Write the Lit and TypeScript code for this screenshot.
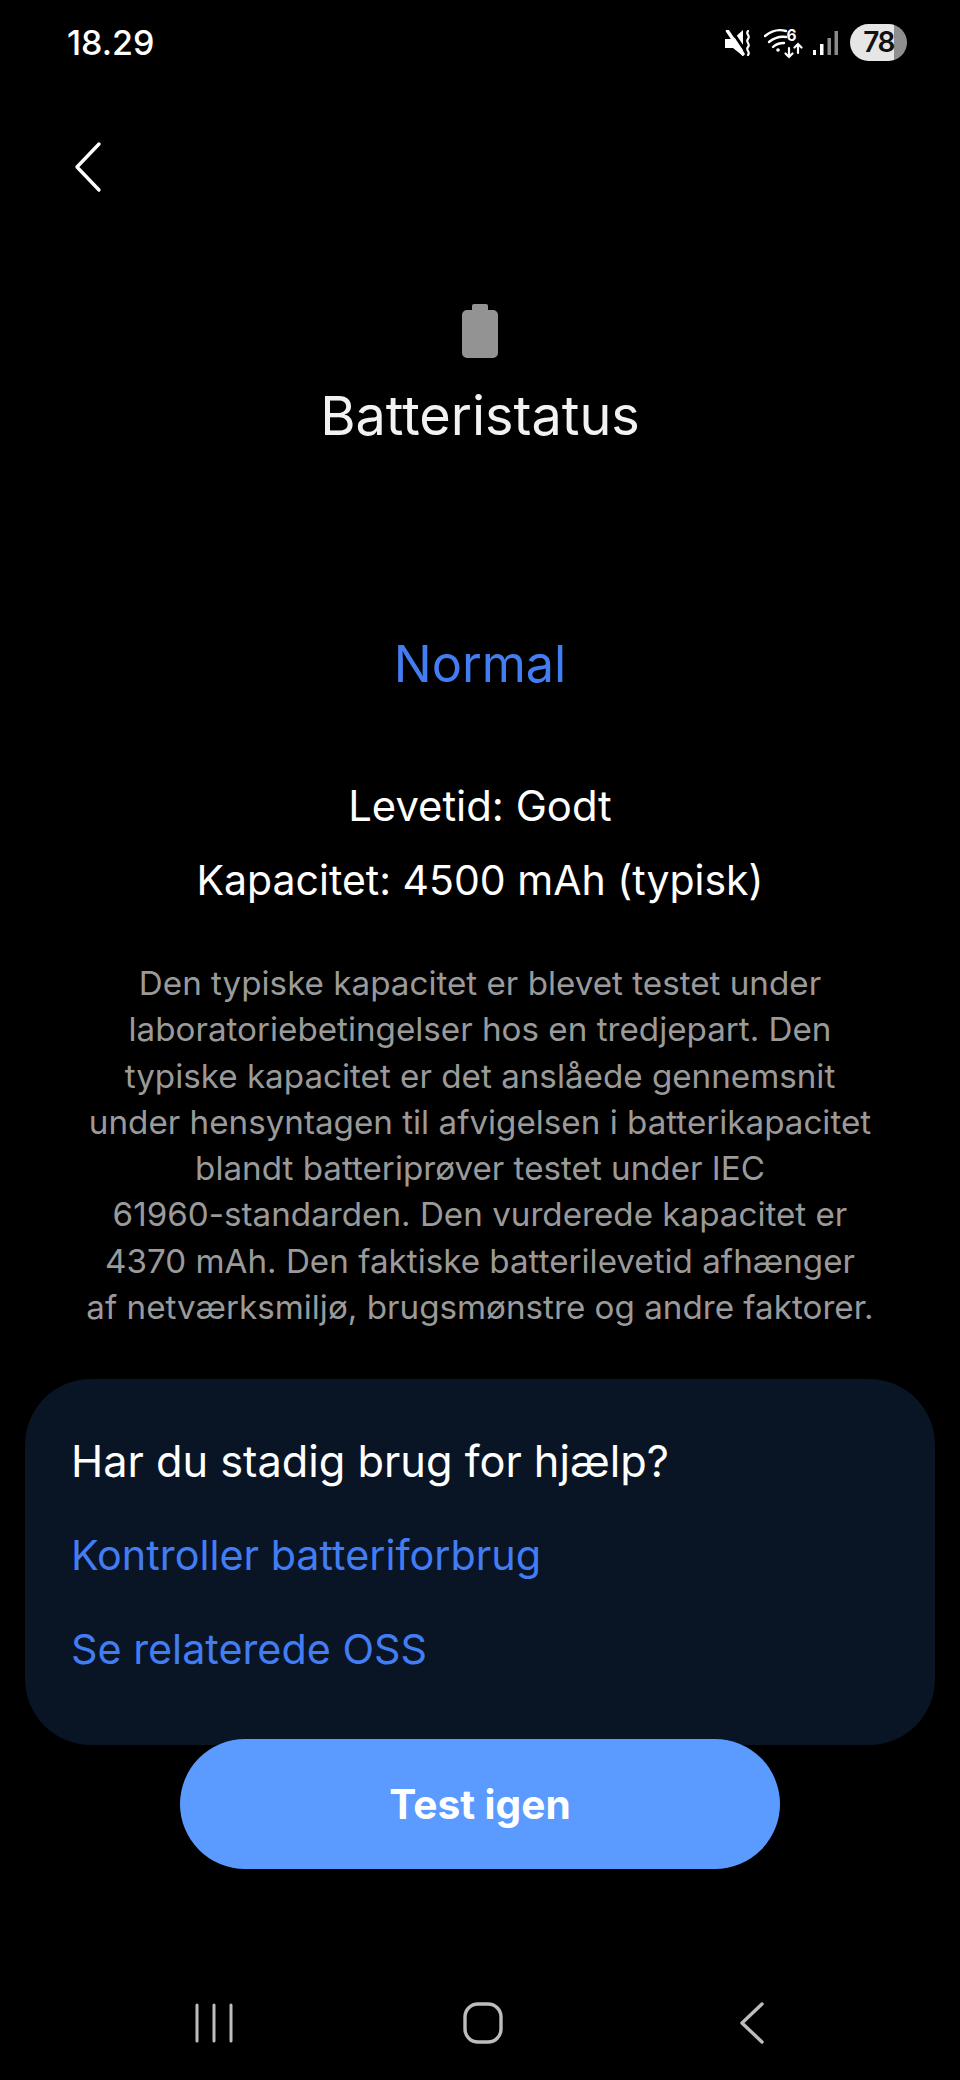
import { LitElement, html, css, svg } from 'lit';
import { customElement } from 'lit/decorators.js';

const muteIcon = svg`
  <path d="M0 9h8l10 -9v26l-10 -8h-8z" fill="#fff"/>
  <path d="M5 -2l16 24" stroke="#000" stroke-width="3" fill="none"/>
  <path d="M2.500 1l15.500 23" stroke="#fff" stroke-width="3.400" fill="none" stroke-linecap="round"/>
  <path d="M23 1c-3 3 3 4.500 0 8s3 4.500 0 8s3 4.500 0 8" stroke="#fff" stroke-width="2.200" fill="none" stroke-linecap="round"/>
`;

const wifiIcon = svg`
  <g fill="none" stroke="#fff" stroke-width="2.400" stroke-linecap="round">
    <path d="M1 8c6 -5 14 -7 21 -5"/>
    <path d="M5 14c5 -4 11 -6 17 -5"/>
    <path d="M9 19c3 -3 7 -4 11 -4"/>
    <path d="M25 20v9m-3.500 -3.500l3.500 3.500l3.500 -3.500" stroke-width="2.200"/>
    <path d="M34 25v-9m-3.500 3.500l3.500 -3.500l3.500 3.500" stroke-width="2.200"/>
  </g>
  <circle cx="14" cy="22" r="1.800" fill="#fff"/>
  <text x="22.500" y="13" font-size="15.500" font-weight="700" font-family="Inter, sans-serif" fill="#fff">6</text>
`;

@customElement('app-root')
export class AppRoot extends LitElement {
  static styles = css`
    :host {
      display: block;
      width: 960px;
      height: 2080px;
      background: #000;
      color: #fff;
      font-family: Inter, 'Noto Sans', sans-serif;
      overflow: hidden;
    }

    .status {
      display: flex;
      align-items: center;
      justify-content: space-between;
      height: 37px;
      padding: 24px 53px 0 67px;
    }

    .time {
      font-size: 34px;
      font-weight: 500;
    }

    .status-icons {
      display: flex;
      align-items: center;
      gap: 12px;
    }

    .mute { width: 26px; height: 26px; }
    .wifi { width: 39px; height: 44px; margin-left: 1px; }
    .signal { width: 26px; height: 26px; margin-left: -3px; }

    .pill {
      width: 57px;
      height: 37px;
      border-radius: 19px;
      background: linear-gradient(90deg, #e6e6e6 0 77%, #8f8f8f 77%);
      color: #111;
      font-size: 28px;
      font-weight: 600;
      letter-spacing: -1.5px;
      line-height: 37px;
      text-align: center;
    }

    .back {
      display: block;
      width: 30px;
      height: 52px;
      margin: 80px 0 0 73px;
    }

    main {
      display: flex;
      flex-direction: column;
      align-items: center;
      text-align: center;
    }

    .battery {
      width: 36px;
      height: 54px;
      margin-top: 111px;
    }

    h1 {
      margin: 27px 0 0;
      font-size: 54px;
      font-weight: 400;
      line-height: 62px;
      color: #f2f2f2;
    }

    .state {
      margin-top: 187px;
      font-size: 50.4px;
      line-height: 60px;
      color: #437df3;
    }

    .life {
      margin-top: 75px;
      font-size: 41px;
      line-height: 74px;
    }

    .life .short { font-size: 41.8px; }

    .note {
      width: 840px;
      margin: 43px 0 0;
      font-size: 33.2px;
      line-height: 46.3px;
      color: #9a9a9a;
    }

    .help {
      margin: 49px 25px 0;
      height: 366px;
      box-sizing: border-box;
      padding: 52px 46px 0;
      border-radius: 66px;
      background: #091425;
    }

    .help-title {
      font-size: 43.3px;
      line-height: 60px;
    }

    .help a {
      display: block;
      margin-top: 34px;
      font-size: 41.3px;
      line-height: 60px;
      color: #437df3;
    }

    .retry {
      position: relative;
      display: block;
      width: 600px;
      height: 130px;
      margin: -6px auto 0;
      border: 0;
      border-radius: 65px;
      background: #5b9bff;
      color: #fff;
      font: 700 40.6px Inter, sans-serif;
    }

    .nav {
      display: flex;
      align-items: center;
      gap: 229px;
      margin-top: 132px;
      padding-left: 194px;
    }

    .nav svg { display: block; height: 44px; }
    .nav svg:last-child { margin-left: 7px; }
  `;

  render() {
    return html`
      <div class="status">
        <span class="time">18.29</span>
        <div class="status-icons">
          <svg class="mute" viewBox="0 0 26 26">${muteIcon}</svg>
          <svg class="wifi" viewBox="0 -7 39 44">${wifiIcon}</svg>
          <svg class="signal" viewBox="0 0 26 26">
            <rect x="1" y="20" width="3" height="5" fill="#fff"/>
            <rect x="8" y="14" width="3.500" height="11" fill="#fff"/>
            <rect x="15.500" y="8" width="3.500" height="17" fill="#8a8a8a"/>
            <rect x="22.500" y="1" width="3.500" height="24" fill="#8a8a8a"/>
          </svg>
          <div class="pill">78</div>
        </div>
      </div>
      <svg class="back" viewBox="0 0 30 52">
        <path d="M26 3L4 26l22 23" fill="none" stroke="#fff" stroke-width="3.4" stroke-linecap="round" stroke-linejoin="round"/>
      </svg>
      <main>
        <svg class="battery" viewBox="0 0 36 54">
          <path d="M10 2a2 2 0 0 1 2 -2h12a2 2 0 0 1 2 2v4h5a5 5 0 0 1 5 5v38a5 5 0 0 1 -5 5h-26a5 5 0 0 1 -5 -5v-38a5 5 0 0 1 5 -5h5z" fill="#939393"/>
        </svg>
        <h1>Batteristatus</h1>
        <div class="state">Normal</div>
        <div class="life">
          <div class="short">Levetid: Godt</div>
          <div>Kapacitet: 4500 mAh (typisk)</div>
        </div>
        <p class="note">
          Den typiske kapacitet er blevet testet under<br />
          laboratoriebetingelser hos en tredjepart. Den<br />
          typiske kapacitet er det anslåede gennemsnit<br />
          under hensyntagen til afvigelsen i batterikapacitet<br />
          blandt batteriprøver testet under IEC<br />
          61960-standarden. Den vurderede kapacitet er<br />
          4370 mAh. Den faktiske batterilevetid afhænger<br />
          af netværksmiljø, brugsmønstre og andre faktorer.
        </p>
      </main>
      <section class="help">
        <div class="help-title">Har du stadig brug for hjælp?</div>
        <a>Kontroller batteriforbrug</a>
        <a>Se relaterede OSS</a>
      </section>
      <button class="retry">Test igen</button>
      <div class="nav">
        <svg viewBox="0 0 40 44" style="width:40px">
          <path d="M3 4v36M20 4v36M37 4v36" stroke="#bdbdbd" stroke-width="3" stroke-linecap="round"/>
        </svg>
        <svg viewBox="0 0 40 44" style="width:40px">
          <rect x="2" y="3" width="36" height="38" rx="13" fill="none" stroke="#bdbdbd" stroke-width="3.4"/>
        </svg>
        <svg viewBox="0 0 26 44" style="width:26px">
          <path d="M23 3L3 22l20 19" fill="none" stroke="#bdbdbd" stroke-width="3.4" stroke-linecap="round" stroke-linejoin="round"/>
        </svg>
      </div>
    `;
  }
}
